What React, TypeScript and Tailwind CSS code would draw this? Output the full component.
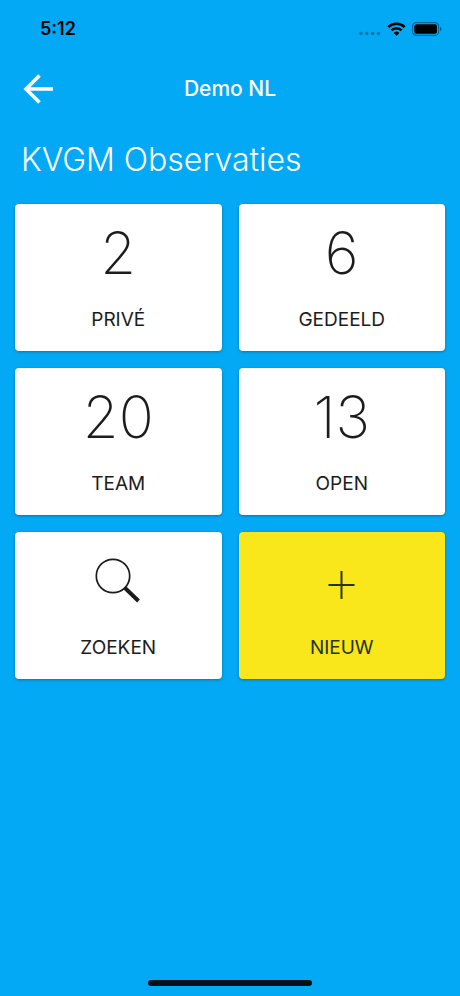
import type { ReactNode } from "react";

type Tile = { label: string; value: ReactNode; accent?: boolean };

function SearchIcon() {
  return (
    <svg width="48" height="48" viewBox="0 0 48 48" fill="none" stroke="currentColor" aria-hidden="true">
      <circle cx="19" cy="19" r="16.7" strokeWidth="1.7" />
      <path d="M31 31 44.5 44" strokeWidth="4" />
    </svg>
  );
}

function PlusIcon() {
  return (
    <svg width="28" height="28" viewBox="0 0 28 28" fill="none" stroke="currentColor" strokeWidth="2" aria-hidden="true">
      <path d="M13.5 0v28M0.500 14h26" />
    </svg>
  );
}

const tiles: Tile[] = [
  { label: "PRIVÉ", value: "2" },
  { label: "GEDEELD", value: "6" },
  { label: "TEAM", value: "20" },
  { label: "OPEN", value: "13" },
  { label: "ZOEKEN", value: <SearchIcon /> },
  { label: "NIEUW", value: <PlusIcon />, accent: true },
];

function StatusBar() {
  return (
    <div className="flex h-[57px] items-center justify-between pr-[18px] pl-10 text-black">
      <span className="text-lg font-semibold">5:12</span>
      <div className="flex items-center gap-[6px]">
        <svg width="22" height="14" viewBox="0 0 22 14" fill="#0577b3" aria-hidden="true">
          <circle cx="2" cy="11.5" r="1.8" />
          <circle cx="7.8" cy="11.5" r="1.8" />
          <circle cx="13.6" cy="11.5" r="1.8" />
          <circle cx="19.4" cy="11.5" r="1.8" />
        </svg>
        <svg width="19" height="14" viewBox="0 0 19 14" aria-hidden="true">
          <g fill="none" stroke="currentColor" strokeWidth="2.6">
            <path d="M1.3 5.1a11.6 11.6 0 0 1 16.4 0" />
            <path d="M4.4 8.3a7.2 7.2 0 0 1 10.2 0" />
          </g>
          <path d="M9.5 13.7 6.7 10.9a4 4 0 0 1 5.6 0z" fill="currentColor" />
        </svg>
        <svg width="30" height="14" viewBox="0 0 30 14" aria-hidden="true">
          <rect x="0.6" y="0.6" width="26" height="12.8" rx="3.6" fill="none" stroke="#056499" strokeWidth="1.1" />
          <rect x="2.3" y="2.3" width="22.6" height="9.4" rx="1.8" fill="currentColor" />
          <path d="M28 4.8c2 .7 2 3.7 0 4.4z" fill="#056499" />
        </svg>
      </div>
    </div>
  );
}

export default function App() {
  return (
    <div className="flex min-h-dvh flex-col bg-[#03a9f5] font-['Inter',sans-serif] text-white">
      <StatusBar />
      <header className="grid h-16 grid-cols-[1fr_auto_1fr] items-center px-[23px]">
        <button type="button" aria-label="Terug" className="justify-self-start">
          <svg width="32" height="32" viewBox="0 0 32 32" fill="none" stroke="currentColor" strokeWidth="3.6" aria-hidden="true">
            <path d="M30 16H3M16.5 2.5 3 16l13.5 13.5" />
          </svg>
        </button>
        <span className="text-[21px] font-medium">Demo NL</span>
      </header>
      <main className="px-[15px]">
        <h1 className="px-[6px] pt-[18px] text-[32px] leading-[41px] font-light">KVGM Observaties</h1>
        <div className="mt-6 grid grid-cols-2 gap-[17px]">
          {tiles.map(({ label, value, accent }) => (
            <button
              key={label}
              type="button"
              className={`flex h-[147px] flex-col items-center rounded-[4px] pt-[14px] shadow-[0_1px_3px_rgba(0,0,0,0.3)] ${
                accent ? "bg-[#f9e71c] text-[#26331f]" : "bg-white text-[#1c1c1c]"
              }`}
            >
              <span className={`flex h-[70px] items-center text-[58px] leading-none font-extralight ${accent ? "pt-2" : ""}`}>
                {value}
              </span>
              <span className="mt-[18px] text-[19px] leading-7">{label}</span>
            </button>
          ))}
        </div>
      </main>
      <div className="mx-auto mt-auto mb-[10px] h-[6px] w-[164px] rounded-full bg-[#031119]" />
    </div>
  );
}
